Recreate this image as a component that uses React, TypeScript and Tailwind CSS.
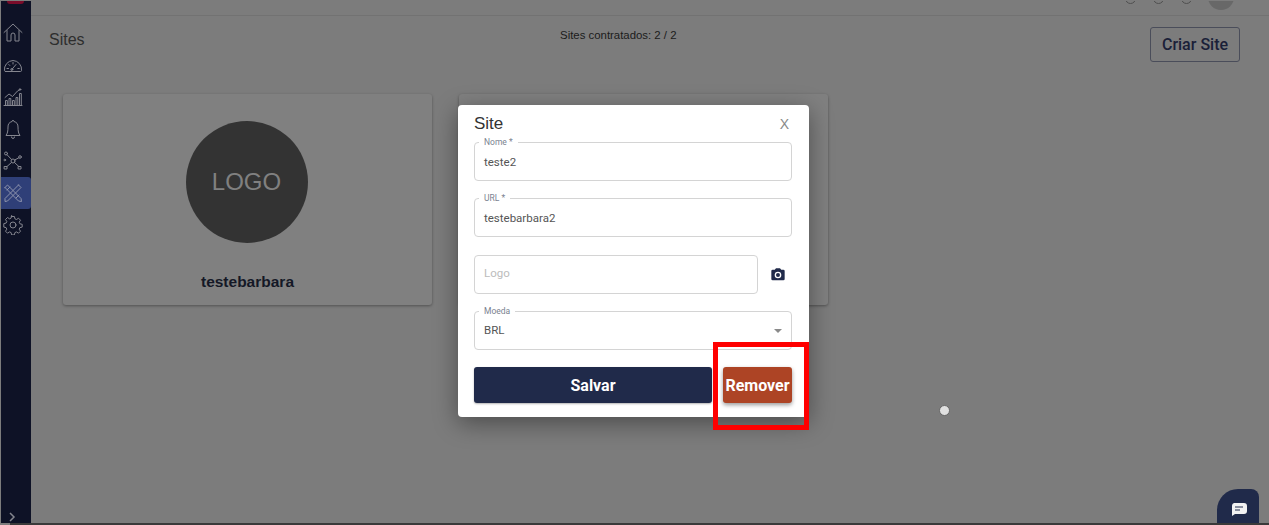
import React from 'react'

const iconProps = {
  width: 20,
  height: 20,
  viewBox: '0 0 20 20',
  fill: 'none',
  stroke: '#85868f',
  strokeWidth: 1,
  strokeLinecap: 'round' as const,
  strokeLinejoin: 'round' as const,
}

const HomeIcon = () => (
  <svg {...iconProps}>
    <path d="M1 9.500 10 1l9 8.500" />
    <path d="M4 7.500V18h4v-6a2 2 0 0 1 4 0v6h4V7.500" />
  </svg>
)

const GaugeIcon = () => (
  <svg {...iconProps}>
    <path d="M2.500 16.500h15a1 1 0 0 0 1-.8A9 9 0 0 0 10 5.500a9 9 0 0 0-8.500 10.200 1 1 0 0 0 1 .8Z" />
    <path d="M8.800 14.500 13 9.500M4 13.500h1.500M14.800 13.500h1.500M5.800 9.500l1 1M10 7.500V9" />
    <circle cx="8.800" cy="14.500" r="1" />
  </svg>
)

const ChartIcon = () => (
  <svg {...iconProps}>
    <path d="M1 18.500h18M2.500 18.500v-5h1.800v5M6 18.500v-7h1.800v7M9.500 18.500v-5h1.800v5M13 18.500v-8h1.800v8M16.500 18.500V6.500h1.800v12" />
    <path d="M2 10.500l4-3.500 3.500 2.500 5-5.500 2.500-1.500" />
    <circle cx="17" cy="2.500" r="0.800" />
  </svg>
)

const BellIcon = () => (
  <svg {...iconProps}>
    <path d="M10 1.500a1 1 0 0 1 1 1 5.500 5.500 0 0 1 4 5.500c0 4 .5 6.500 2 8.500H3c1.500-2 2-4.500 2-8.500a5.500 5.500 0 0 1 4-5.500 1 1 0 0 1 1-1Z" />
    <path d="M8.500 18a1.500 1.500 0 0 0 3 0" />
  </svg>
)

const NetworkIcon = () => (
  <svg {...iconProps}>
    <circle cx="10" cy="10" r="2" />
    <circle cx="3" cy="2.500" r="1.500" />
    <circle cx="17" cy="6" r="1.300" />
    <rect x="1.500" y="15.500" width="2.500" height="2.500" />
    <rect x="15.500" y="15.500" width="2.500" height="2.500" />
    <circle cx="1.800" cy="9" r="0.800" />
    <path d="M4 3.700 8.600 8.500M15.800 6.800 11.700 9M4 15.500l4.500-4M15.800 15.500 11.500 11.500" />
  </svg>
)

const ToolsIcon = () => (
  <svg {...iconProps} stroke="#8d93ad">
    <path d="M2 4.500 4.500 2 18 15.500 18.500 18.500 15.500 18 2 4.500Z" />
    <path d="M15.500 2 18 4.500 4.500 18 2 18.500 2 15.500 15.500 2Z" />
    <path d="M4 7 7 4M13 15l3-3" />
  </svg>
)

const GearIcon = () => (
  <svg {...iconProps}>
    <circle cx="10" cy="10" r="3" />
    <path d="M8.600 1.500h2.800l.5 2.300 1.600.7 2-1.300 2 2-1.300 2 .7 1.600 2.300.5v2.800l-2.300.5-.7 1.600 1.300 2-2 2-2-1.300-1.600.7-.5 2.300H8.600l-.5-2.300-1.600-.7-2 1.300-2-2 1.300-2-.7-1.600-2.300-.5V8.600l2.300-.5.700-1.600-1.300-2 2-2 2 1.300 1.600-.7.500-2.300Z" />
  </svg>
)

const SideItem = ({ children, active }: { children: React.ReactNode; active?: boolean }) => (
  <div className={`flex h-[32px] w-[30px] items-center justify-center pr-[7px] ${active ? 'rounded-r-[3px] bg-[#2f3f78]' : ''}`}>
    {children}
  </div>
)

const Field = ({ label, value, placeholder, textClass }: { label?: string; value?: string; placeholder?: string; textClass?: string }) => (
  <div className="relative flex h-[39px] flex-1 items-center rounded-[4px] border border-[#d4d4d4] px-[9px] text-[11.5px]">
    {label && (
      <span className="absolute -top-[6px] left-[4px] bg-white px-[5px] text-[8.5px] leading-[10px] text-[#7a8290]">{label}</span>
    )}
    {value && <span className={`text-[#555555] ${textClass ?? ''}`}>{value}</span>}
    {placeholder && <span className={`text-[#bcbcbc] ${textClass ?? ''}`}>{placeholder}</span>}
  </div>
)

const Card = ({ children }: { children?: React.ReactNode }) => (
  <div className="flex h-[211px] w-[369px] flex-col items-center rounded-[3px] bg-[#808080] shadow-[0_1px_3px_rgba(0,0,0,0.35)]">
    {children}
  </div>
)

export default function App() {
  return (
    <div className="relative flex h-[525px] w-[1269px] overflow-hidden bg-[#7c7c7c] pb-[2px] pl-[1px] pt-[1px] font-['Roboto',sans-serif]">
      {/* Sidebar */}
      <aside className="flex w-[30px] shrink-0 flex-col items-center overflow-hidden bg-[#0e1226]">
        <div className="h-[3px] w-[17px] shrink-0 -translate-x-[1px] rounded-b-[6px] bg-[#7a0c2a]" />
        <div className="mt-[13px] flex flex-col">
          <SideItem><HomeIcon /></SideItem>
          <SideItem><GaugeIcon /></SideItem>
          <SideItem><ChartIcon /></SideItem>
          <SideItem><BellIcon /></SideItem>
          <SideItem><NetworkIcon /></SideItem>
          <SideItem active><ToolsIcon /></SideItem>
          <SideItem><GearIcon /></SideItem>
        </div>
        <svg className="mb-[1px] mr-[9px] mt-auto" width="10" height="10" viewBox="0 0 10 10" fill="none" stroke="#85868f" strokeWidth="1.500">
          <path d="M3 1l4 4-4 4" />
        </svg>
      </aside>

      {/* Main */}
      <main className="flex min-w-0 flex-1 flex-col">
        <header className="flex h-[15px] shrink-0 items-start justify-end overflow-hidden border-b border-[#727272]">
          <div className="-mt-[8px] mr-[35px] flex items-start">
            <span className="mr-[17px] h-[11px] w-[11px] rounded-full border border-[#505050]" />
            <span className="mr-[17px] h-[11px] w-[11px] rounded-full border border-[#505050]" />
            <span className="mr-[16px] h-[11px] w-[11px] rounded-full border border-[#505050]" />
            <span className="-mt-[9px] h-[26px] w-[26px] rounded-full bg-[#686868]" />
          </div>
        </header>

        <section className="relative flex-1">
          <div className="flex h-[78px] items-start justify-between pl-[18px] pr-[29px]">
            <h1 className="mt-[14px] font-['Liberation_Sans',sans-serif] text-[16px] leading-[20px] text-[#2e2e2e]">Sites</h1>
            <p className="ml-[2px] mt-[12px] font-['Liberation_Sans',sans-serif] text-[11.400px] leading-[14px] text-[#1b1b1b]">Sites contratados: 2 / 2</p>
            <button className="mt-[11px] h-[35px] w-[90px] rounded-[3px] border border-[#4a4d5a] pt-[1px] text-[16px] font-medium text-[#1a2038]">Criar Site</button>
          </div>
          <div className="flex gap-[27px] pl-[32px]">
            <Card>
              <div className="mr-[2px] mt-[27px] flex h-[122px] w-[122px] items-center justify-center rounded-full bg-[#333333] font-['Liberation_Sans',sans-serif] text-[24px] text-[#808080]">LOGO</div>
              <p className="mt-[29px] font-['Liberation_Sans',sans-serif] text-[15.500px] font-bold leading-[20px] text-[#141826]">testebarbara</p>
            </Card>
            <Card />
          </div>
          <div className="absolute bottom-0 right-[10px] h-[34px] w-[42px] rounded-t-[21px] rounded-tr-[8px] bg-[#202a4a]">
            <svg className="absolute left-[14px] top-[14px]" width="16" height="13" viewBox="0 0 16 13">
              <path d="M3 0h10a3 3 0 0 1 3 3v5a3 3 0 0 1-3 3H4l-3 2V3a3 3 0 0 1 2-3Z" fill="#f2f2f2" />
              <path d="M4 4h8M4 7h5" stroke="#202a4a" strokeWidth="1.200" />
            </svg>
          </div>
        </section>
      </main>

      {/* Window bottom edge */}
      <div className="absolute bottom-0 left-[10px] right-0 h-[2px] bg-[#3a3a3a]" />

      {/* Cursor highlight */}
      <div className="absolute left-[939px] top-[405px] h-[11px] w-[11px] rounded-full border border-[#666666] bg-[#e0e0e0]" />

      {/* Modal */}
      <div className="absolute left-[458px] top-[105px] flex h-[312px] w-[351px] flex-col rounded-[4px] bg-white px-[16px] shadow-[0_6px_24px_rgba(0,0,0,0.4)]">
        <div className="flex h-[37px] shrink-0 items-start justify-between">
          <h2 className="mt-[9px] font-['Liberation_Sans',sans-serif] text-[17px] leading-[20px] text-[#333333]">Site</h2>
          <span className="mr-[4px] mt-[11px] font-['Liberation_Sans',sans-serif] text-[14px] leading-[16px] text-[#8a8a8a]">X</span>
        </div>
        <div className="flex w-[318px] flex-col gap-[17px]">
          <div className="flex"><Field label="Nome *" value="teste2" textClass="pt-[2px]" /></div>
          <div className="flex"><Field label="URL *" value="testebarbara2" textClass="pt-[2px]" /></div>
          <div className="mt-[1px] flex items-center">
            <Field placeholder="Logo" textClass="pb-[2px]" />
            <svg className="ml-[12px] mr-[6px]" width="16" height="16" viewBox="0 0 24 24" fill="#202a4a">
              <path fillRule="evenodd" d="M9 2 7.170 4H4a2 2 0 0 0-2 2v12a2 2 0 0 0 2 2h16a2 2 0 0 0 2-2V6a2 2 0 0 0-2-2h-3.170L15 2H9Zm3 15a5 5 0 1 1 0-10 5 5 0 0 1 0 10Zm0-2a3 3 0 1 0 0-6 3 3 0 0 0 0 6Z" />
            </svg>
          </div>
          <div className="relative flex">
            <Field label="Moeda" value="BRL" />
            <span className="absolute right-[10px] top-[18px] h-0 w-0 border-x-[4px] border-t-[4px] border-x-transparent border-t-[#8a8a8a]" />
          </div>
        </div>
        <div className="mt-[17px] flex w-[318px] gap-[11px]">
          <button className="h-[36px] flex-1 rounded-[3px] bg-[#202a4a] pt-[2px] text-[16px] font-bold text-white shadow-[0_1px_2px_rgba(0,0,0,0.3)]">Salvar</button>
          <button className="h-[36px] w-[69px] rounded-[3px] bg-[#ad4425] pt-[2px] text-[16px] font-bold text-white shadow-[0_2px_4px_rgba(0,0,0,0.4)]">Remover</button>
        </div>
      </div>

      {/* Red annotation */}
      <div className="absolute left-[713px] top-[342px] h-[88px] w-[96px] border-[5px] border-[#ff0000]" />
    </div>
  )
}
